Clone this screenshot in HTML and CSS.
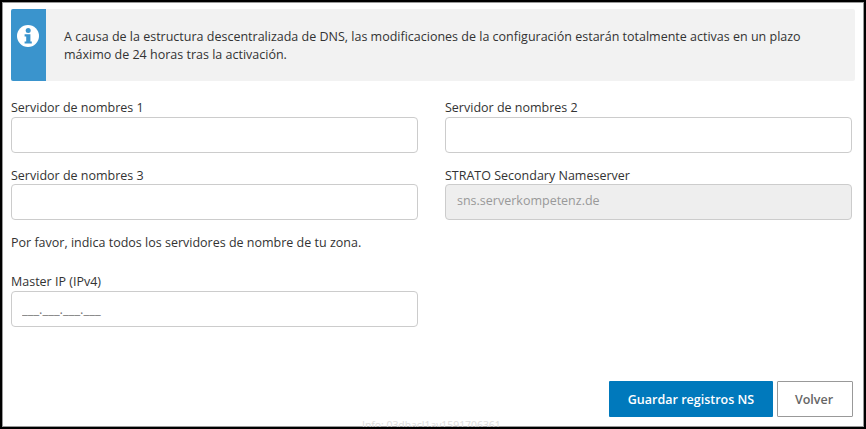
FILE: index.html
```html
<!DOCTYPE html>
<html lang="es">
<head>
<meta charset="utf-8">
<title>Servidores de nombres</title>
<link rel="stylesheet" href="styles.css">
</head>
<body>
<div class="frame">
  <div class="alert">
    <div class="alert-icon">
      <svg width="24" height="24" viewBox="0 0 24 24" aria-hidden="true">
        <circle cx="12" cy="12" r="11" fill="#fff"/>
        <circle cx="12.2" cy="6.6" r="2.5" fill="#3a94cd"/>
        <path d="M8.6 10.2h5.8v7.2h1.4v2.2H8.6v-2.2h1.6v-5H8.6z" fill="#3a94cd"/>
      </svg>
    </div>
    <p class="alert-text">A causa de la estructura descentralizada de DNS, las modificaciones de la configuración estarán totalmente activas en un plazo máximo de 24 horas tras la activación.</p>
  </div>
  <form class="form">
    <div class="grid">
      <div class="field">
        <label class="label" for="ns1">Servidor de nombres 1</label>
        <input class="input" id="ns1" type="text">
      </div>
      <div class="field">
        <label class="label" for="ns2">Servidor de nombres 2</label>
        <input class="input" id="ns2" type="text">
      </div>
      <div class="field">
        <label class="label label-low" for="ns3">Servidor de nombres 3</label>
        <input class="input" id="ns3" type="text">
      </div>
      <div class="field">
        <label class="label label-low" for="ns4">STRATO Secondary Nameserver</label>
        <input class="input input-disabled" id="ns4" type="text" value="sns.serverkompetenz.de" disabled>
      </div>
    </div>
    <p class="help">Por favor, indica todos los servidores de nombre de tu zona.</p>
    <div class="field field-half">
      <label class="label" for="ip">Master IP (IPv4)</label>
      <input class="input input-mask" id="ip" type="text" placeholder="___.___.___.___">
    </div>
    <div class="actions">
      <button class="btn btn-primary" type="button">Guardar registros NS</button>
      <button class="btn btn-secondary" type="button">Volver</button>
    </div>
  </form>
  <div class="info">Info: 03dhacl1av1591706361</div>
</div>
</body>
</html>
```

FILE: styles.css
```css
* { box-sizing: border-box; }
html, body { margin: 0; padding: 0; background: #fff; }
body { font-family: "Open Sans", sans-serif; font-size: 12.5px; color: #333; }
.frame {
  position: relative;
  width: 866px;
  height: 429px;
  border: 2px solid #000;
  box-shadow: inset 0 0 0 1px #999;
  padding: 7px 11px 0 9px;
  overflow: hidden;
}
.alert { display: flex; height: 72px; background: #f2f2f2; border-radius: 2px; overflow: hidden; width: 844px; }
.alert-icon { width: 35px; flex: none; background: #3a94cd; display: flex; justify-content: center; padding: 15px 2px 0 0; }
.alert-text { margin: 0; padding: 19px 30px 0 18px; line-height: 18px; }
.grid { display: grid; grid-template-columns: 407px 407px; column-gap: 27px; row-gap: 11px; margin-top: 16px; }
.field { display: flex; flex-direction: column; }
.label { line-height: 22px; height: 20px; }
.label-low { line-height: 24px; }
.input {
  width: 100%;
  height: 36px;
  border: 1px solid #ccc;
  border-radius: 4px;
  padding: 0 11px;
  font: inherit;
  background: #fff;
  color: #333;
}
.input-disabled { background: #eee; color: #999; -webkit-text-fill-color: #999; opacity: 1; padding-bottom: 3px; }
.input-mask { font-size: 13px; padding-left: 10px; }
.input-mask::placeholder { color: #777; opacity: 1; }
.help { margin: 13px 0 0; line-height: 20px; height: 20px; }
.field-half { width: 407px; margin-top: 18px; }
.actions { display: flex; justify-content: flex-end; gap: 4px; margin-top: 54px; width: 842px; }
.btn { height: 36px; font: 600 12.5px "Open Sans", sans-serif; border-radius: 1px; cursor: pointer; }
.btn-primary { width: 164px; background: #0079bc; color: #fff; border: 0; }
.btn-secondary { width: 76px; background: #fff; color: #666; border: 1px solid #999; padding: 0 8px 0 6px; }
.info { position: absolute; left: 360px; top: 416px; font-size: 10.4px; color: #ddd; white-space: nowrap; }
```
